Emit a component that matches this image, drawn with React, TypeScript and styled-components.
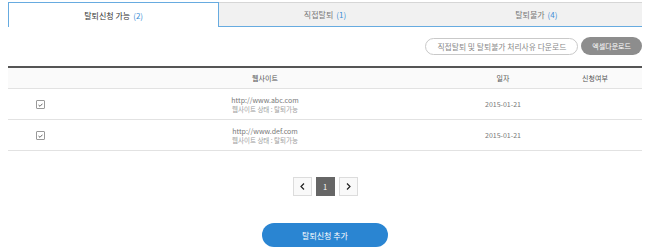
import styled, { createGlobalStyle } from "styled-components";

const GlobalStyle = createGlobalStyle`
  body {
    margin: 2px 8px 8px;
    background: #ffffff;
    font-family: "Noto Sans CJK KR", "Noto Sans", sans-serif;
    color: #444;
  }
`;

const Wrapper = styled.div`
  width: 634px;
`;

const Tabs = styled.div`
  display: grid;
  grid-template-columns: repeat(3, 1fr);
  height: 25px;
`;

const Tab = styled.div<{ $active?: boolean }>`
  display: flex;
  align-items: center;
  justify-content: center;
  font-size: 8px;
  color: ${(p) => (p.$active ? "#333" : "#777")};
  background: ${(p) => (p.$active ? "#fff" : "#f1f1f1")};
  border-top: 1px solid ${(p) => (p.$active ? "#67abe0" : "#d6d6d6")};
  border-left: ${(p) => (p.$active ? "1px solid #67abe0" : "none")};
  border-right: ${(p) => (p.$active ? "1px solid #67abe0" : "none")};
  border-bottom: ${(p) => (p.$active ? "none" : "1px solid #67abe0")};
  box-sizing: border-box;
`;

const Count = styled.span`
  color: #3f8fd6;
  margin-left: 3px;
`;

const Actions = styled.div`
  display: flex;
  justify-content: flex-end;
  align-items: center;
  gap: 3px;
  margin-top: 10px;
`;

const OutlineButton = styled.button`
  height: 17px;
  padding: 0 11px;
  border: 1px solid #c9c9c9;
  border-radius: 9px;
  background: #fff;
  color: #888;
  font-family: inherit;
  font-size: 7.8px;
  cursor: pointer;
`;

const GreyButton = styled.button`
  height: 18px;
  padding: 0 11px;
  border: none;
  border-radius: 9px;
  background: #8d8d8d;
  color: #fff;
  font-family: inherit;
  font-size: 7px;
  cursor: pointer;
`;

const Table = styled.table`
  width: 100%;
  margin-top: 11px;
  border-collapse: collapse;
  border-top: 2px solid #555;
  table-layout: fixed;
`;

const Th = styled.th<{ $width?: number }>`
  width: ${(p) => (p.$width ? `${p.$width}px` : "auto")};
  height: 20px;
  padding: 0;
  background: #fafafa;
  border-bottom: 1px solid #e2e2e2;
  font-size: 7px;
  font-weight: normal;
  color: #555;
  text-align: center;
`;

const Td = styled.td`
  height: 30px;
  padding: 0;
  border-bottom: 1px solid #e2e2e2;
  text-align: center;
  font-size: 7px;
  color: #777;
  vertical-align: middle;
`;

const Url = styled.div`
  font-size: 7px;
  color: #777;
  line-height: 9px;
`;

const Status = styled.div`
  font-size: 6.5px;
  color: #a0a0a0;
  line-height: 8px;
`;

const CheckBox = styled.span`
  display: inline-flex;
  align-items: center;
  justify-content: center;
  width: 9px;
  height: 9px;
  border: 1px solid #999;
  border-radius: 1px;
  box-sizing: border-box;
  vertical-align: middle;
`;

const Pager = styled.div`
  display: flex;
  justify-content: center;
  gap: 4px;
  margin-top: 26px;
`;

const PageButton = styled.button<{ $active?: boolean }>`
  width: 19px;
  height: 19px;
  padding: 0;
  display: flex;
  align-items: center;
  justify-content: center;
  border: 1px solid ${(p) => (p.$active ? "#666" : "#dcdcdc")};
  background: ${(p) => (p.$active ? "#666" : "#f9f9f9")};
  color: ${(p) => (p.$active ? "#fff" : "#333")};
  font-family: inherit;
  font-size: 7.5px;
  box-sizing: border-box;
`;

const Footer = styled.div`
  display: flex;
  justify-content: center;
  margin-top: 27px;
`;

const PrimaryButton = styled.button`
  width: 126px;
  height: 24px;
  border: none;
  border-radius: 12px;
  background: #2a85d2;
  color: #fff;
  font-family: inherit;
  font-size: 8px;
  cursor: pointer;
`;

const Check = () => (
  <CheckBox>
    <svg width="5" height="4" viewBox="0 0 5 4">
      <path d="M0.5 2 L2 3.3 L4.5 0.7" fill="none" stroke="#555" strokeWidth="0.9" />
    </svg>
  </CheckBox>
);

const Chevron = ({ dir }: { dir: "left" | "right" }) => (
  <svg width="5" height="7" viewBox="0 0 5 7">
    <path
      d={dir === "left" ? "M4 0.5 L1 3.5 L4 6.5" : "M1 0.5 L4 3.5 L1 6.5"}
      fill="none"
      stroke="#222"
      strokeWidth="1.2"
    />
  </svg>
);

const rows = [
  { url: "http://www.abc.com", date: "2015-01-21" },
  { url: "http://www.def.com", date: "2015-01-21" },
];

export default function App() {
  return (
    <Wrapper>
      <GlobalStyle />
      <Tabs>
        <Tab $active>
          탈퇴신청 가능<Count>(2)</Count>
        </Tab>
        <Tab>
          직접탈퇴<Count>(1)</Count>
        </Tab>
        <Tab>
          탈퇴불가<Count>(4)</Count>
        </Tab>
      </Tabs>

      <Actions>
        <OutlineButton>직접탈퇴 및 탈퇴불가 처리사유 다운로드</OutlineButton>
        <GreyButton>엑셀다운로드</GreyButton>
      </Actions>

      <Table>
        <thead>
          <tr>
            <Th $width={64}></Th>
            <Th>웹사이트</Th>
            <Th $width={90}>일자</Th>
            <Th $width={94}>신청여부</Th>
          </tr>
        </thead>
        <tbody>
          {rows.map((row) => (
            <tr key={row.url}>
              <Td>
                <Check />
              </Td>
              <Td>
                <Url>{row.url}</Url>
                <Status>웹사이트 상태 : 탈퇴가능</Status>
              </Td>
              <Td>{row.date}</Td>
              <Td></Td>
            </tr>
          ))}
        </tbody>
      </Table>

      <Pager>
        <PageButton>
          <Chevron dir="left" />
        </PageButton>
        <PageButton $active>1</PageButton>
        <PageButton>
          <Chevron dir="right" />
        </PageButton>
      </Pager>

      <Footer>
        <PrimaryButton>탈퇴신청 추가</PrimaryButton>
      </Footer>
    </Wrapper>
  );
}
